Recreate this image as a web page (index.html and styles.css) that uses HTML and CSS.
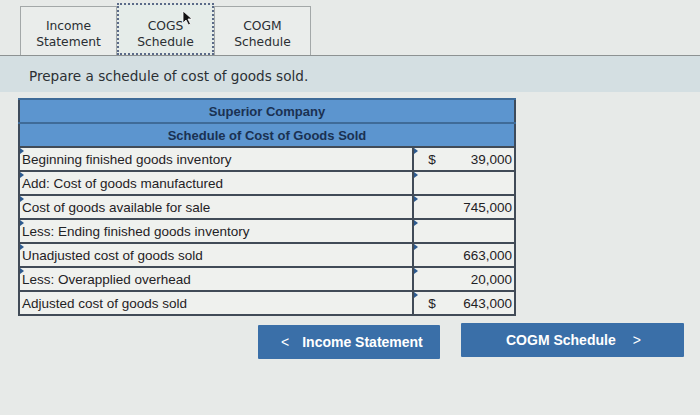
FILE: index.html
```html
<!DOCTYPE html>
<html>
<head>
<meta charset="utf-8">
<link rel="stylesheet" href="styles.css">
</head>
<body>
<div class="tabbar">
  <div class="tab">Income<br>Statement</div>
  <div class="tab active">COGS<br>Schedule<span class="cursor"><svg width="12" height="16" viewBox="0 0 12 16"><path d="M1 1 L1 13 L4 10 L6.5 15 L8.5 14 L6 9 L10 9 Z" fill="#111" stroke="#fff" stroke-width="0.8"/></svg></span></div>
  <div class="tab">COGM<br>Schedule</div>
</div>
<div class="instr">Prepare a schedule of cost of goods sold.</div>
<table class="sched">
  <tr class="hd"><th colspan="2">Superior Company</th></tr>
  <tr class="hd"><th colspan="2">Schedule of Cost of Goods Sold</th></tr>
  <tr><td class="lbl mk">Beginning finished goods inventory</td><td class="amt mk"><span class="cur">$</span><span class="num">39,000</span></td></tr>
  <tr><td class="lbl mk">Add: Cost of goods manufactured</td><td class="amt mk"><span class="num"></span></td></tr>
  <tr><td class="lbl mk">Cost of goods available for sale</td><td class="amt mk"><span class="num">745,000</span></td></tr>
  <tr><td class="lbl mk">Less: Ending finished goods inventory</td><td class="amt mk"><span class="num"></span></td></tr>
  <tr><td class="lbl mk">Unadjusted cost of goods sold</td><td class="amt mk"><span class="num">663,000</span></td></tr>
  <tr><td class="lbl mk">Less: Overapplied overhead</td><td class="amt mk"><span class="num">20,000</span></td></tr>
  <tr><td class="lbl">Adjusted cost of goods sold</td><td class="amt mk"><span class="cur">$</span><span class="num">643,000</span></td></tr>
</table>
<div class="navs">
  <button class="btn prev"><span class="chev">&lt;</span>Income Statement</button>
  <button class="btn next">COGM Schedule<span class="chev">&gt;</span></button>
</div>
</body>
</html>
```
FILE: styles.css
```css
html, body {
  margin: 0;
  padding: 0;
}
body {
  background: #e7eae8;
  width: 700px;
  height: 415px;
  overflow: hidden;
  font-family: "Liberation Sans", Arial, sans-serif;
}
.tabbar {
  display: flex;
  align-items: flex-end;
  height: 56px;
  padding-left: 20px;
  border-bottom: 1px solid #8d9292;
  box-sizing: border-box;
}
.tab {
  width: 97px;
  height: 49px;
  box-sizing: border-box;
  border: 1px solid #a3a8a8;
  border-bottom: none;
  font-family: "DejaVu Sans", Verdana, sans-serif;
  font-size: 12.3px;
  line-height: 16px;
  color: #2a2f33;
  text-align: center;
  display: flex;
  align-items: center;
  justify-content: center;
  padding-top: 5px;
  background: #eaedeb;
}
.tab.active {
  height: 52px;
  border: 2px dotted #5b6a88;
  border-bottom: 2px dotted #5b6a88;
  position: relative;
  background: #e5ece9;
  padding-top: 9px;
}
.cursor {
  position: absolute;
  left: 63px;
  top: 5px;
  line-height: 0;
}
.instr {
  background: #d4dfe2;
  height: 36px;
  padding-left: 29px;
  font-family: "DejaVu Sans", Verdana, sans-serif;
  font-size: 13.6px;
  color: #2b3034;
  display: flex;
  align-items: center;
  padding-top: 3px;
  box-sizing: border-box;
}
.sched {
  margin: 6px 0 0 18px;
  width: 498px;
  border-collapse: collapse;
  border: 2px solid #3e4b5b;
  font-size: 13.5px;
}
.hd th {
  background: #5c95cf;
  color: #1a3152;
  font-weight: bold;
  height: 22px;
  padding: 0;
  border-top: 2px solid #3f6b98;
  text-align: center;
  font-size: 13px;
}
.sched td {
  height: 22px;
  padding: 0;
  border: 2px solid #414b57;
  background: #eff1ee;
  color: #1f2225;
  position: relative;
}
.lbl {
  width: 392px;
  padding-left: 2px !important;
}
.amt {
  width: 100px;
  white-space: nowrap;
}
.amt .cur {
  display: inline-block;
  margin-left: 14px;
}
.amt .num {
  float: right;
  margin-right: 2px;
}
.mk::before {
  content: "";
  position: absolute;
  left: 0;
  top: 0;
  border-left: 4px solid #2c5a8f;
  border-top: 3px solid transparent;
  border-bottom: 3px solid transparent;
}
.navs {
  display: flex;
  align-items: flex-start;
  margin: 7px 0 0 258px;
  gap: 21px;
}
.btn {
  border: none;
  background: #3a6fa8;
  color: #fff;
  font-family: "Liberation Sans", Arial, sans-serif;
  font-weight: bold;
  font-size: 14px;
  height: 34px;
  padding: 0;
  display: flex;
  align-items: center;
  border-radius: 1px;
}
.prev {
  width: 182px;
  margin-top: 2px;
  padding-left: 23px;
}
.prev .chev {
  margin-right: 13px;
  font-weight: normal;
}
.next {
  width: 223px;
  padding-left: 45px;
}
.next .chev {
  margin-left: 17px;
  font-weight: normal;
}
```
